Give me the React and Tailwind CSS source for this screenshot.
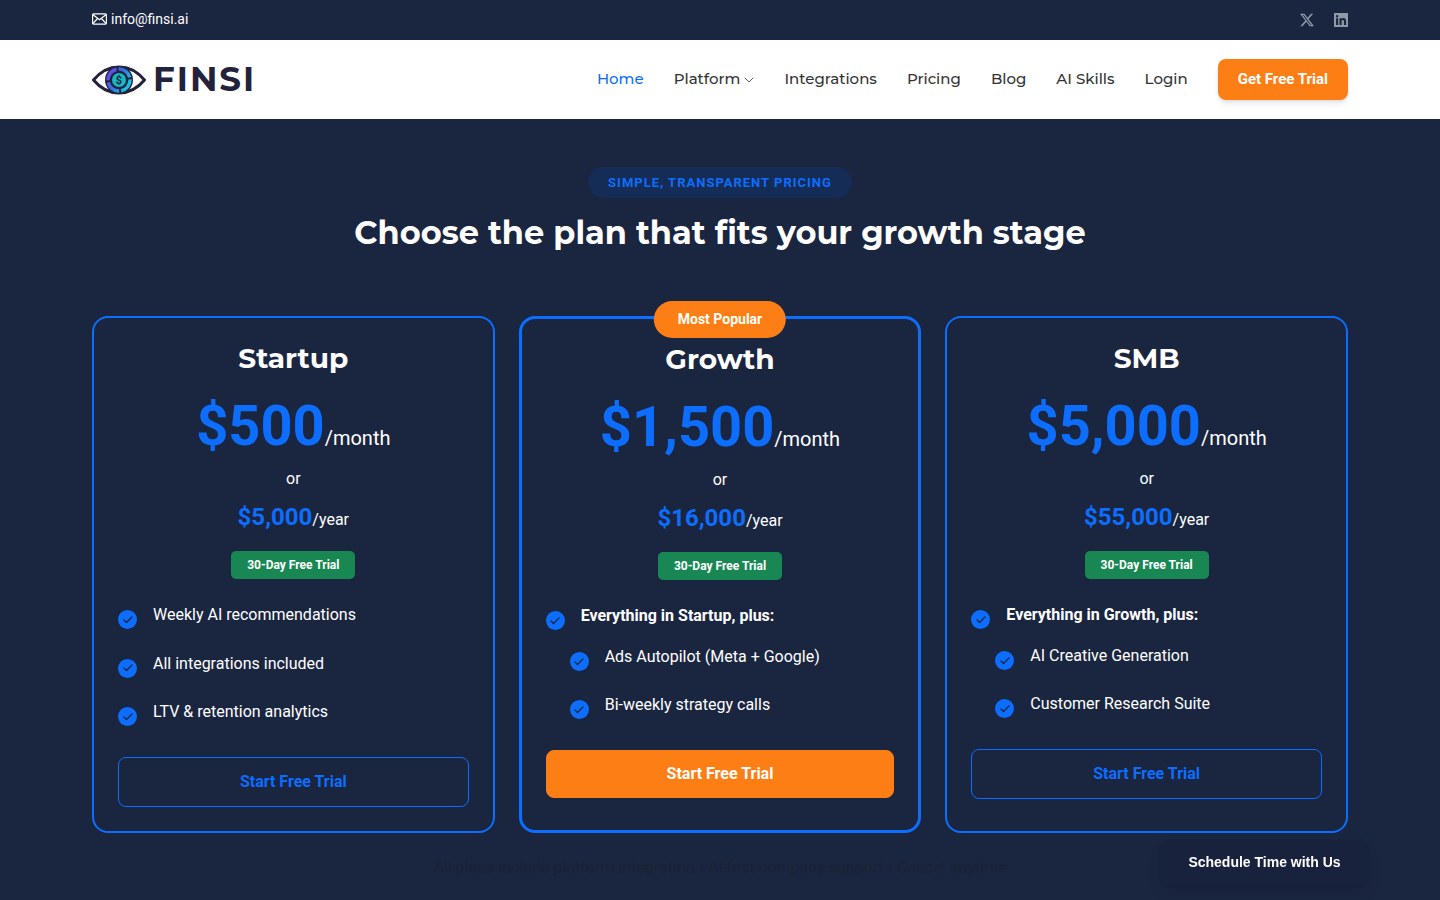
import React from 'react';
import { Check, ChevronDown } from 'lucide-react';

const headingFont = "font-['Montserrat','Inter',sans-serif]";

const plans = [
  {
    name: 'Startup',
    price: '$500',
    yearly: '$5,000',
    items: ['Weekly AI recommendations', 'All integrations included', 'LTV & retention analytics'],
  },
  {
    name: 'Growth',
    price: '$1,500',
    yearly: '$16,000',
    popular: true,
    lead: 'Everything in Startup, plus:',
    items: ['Ads Autopilot (Meta + Google)', 'Bi-weekly strategy calls'],
  },
  {
    name: 'SMB',
    price: '$5,000',
    yearly: '$55,000',
    lead: 'Everything in Growth, plus:',
    items: ['AI Creative Generation', 'Customer Research Suite'],
  },
];

const navLinks = ['Integrations', 'Pricing', 'Blog', 'AI Skills', 'Login'];

const Logo = () => (
  <div className="flex items-center gap-[7px]">
    <svg width="54" height="30" viewBox="0 0 54 30" fill="none">
      <defs>
        <linearGradient id="iris" x1="0" y1="0" x2="1" y2="0.6">
          <stop offset="0" stopColor="#7c3aed" />
          <stop offset="0.5" stopColor="#2f6fe6" />
          <stop offset="1" stopColor="#1fc0e0" />
        </linearGradient>
      </defs>
      <path d="M1.5 15C9 6 17 2 27 2s18 4 25.5 13C45 24 37 28 27 28S9 24 1.5 15Z" stroke="#22223b" strokeWidth="3" strokeLinejoin="round" />
      <circle cx="27" cy="15" r="14" fill="#22223b" />
      <circle cx="27" cy="15" r="11" stroke="url(#iris)" strokeWidth="3.5" strokeDasharray="15 2" />
      <circle cx="27" cy="15" r="7" fill="#19b6c4" />
      <text x="27" y="19" textAnchor="middle" fontSize="11" fontWeight="700" fill="#22223b" fontFamily="Roboto, sans-serif">$</text>
    </svg>
    <span className={`${headingFont} mb-[2px] text-[34px] leading-none font-bold tracking-[2px] text-[#22223b]`}>FINSI</span>
  </div>
);

const CheckDot = () => (
  <span className="mt-[7px] flex h-[19px] w-[19px] shrink-0 items-center justify-center rounded-full bg-[#0d6efd]">
    <Check className="h-3 w-3 text-[#1a2540]" strokeWidth={2.5} />
  </span>
);

const PlanCard = ({ plan }) => (
  <div className={`relative rounded-[16px] border-[#0d6efd] px-6 pt-[22px] pb-6 ${plan.popular ? 'border-[3px]' : 'border-2'}`}>
    {plan.popular && (
      <span className="absolute top-[-18px] left-1/2 -translate-x-1/2 rounded-full bg-[#fd7e14] px-6 py-[9px] text-sm leading-[19px] font-bold text-white">
        Most Popular
      </span>
    )}
    <h3 className={`${headingFont} text-center text-[28px] leading-[36px] font-bold text-white`}>{plan.name}</h3>
    <div className="mt-[17px] text-center text-white">
      <span className="text-[56px] leading-[67px] font-bold text-[#0d6efd]">{plan.price}</span>
      <span className="text-xl">/month</span>
    </div>
    <p className="mt-[7px] text-center text-base leading-6 text-white">or</p>
    <div className="mt-[10px] text-center text-white">
      <span className="text-2xl leading-[32px] font-bold text-[#0d6efd]">{plan.yearly}</span>
      <span className="text-base">/year</span>
    </div>
    <div className="mt-[18px] flex justify-center">
      <span className="rounded-[5px] bg-[#198754] px-4 py-[6px] text-xs leading-4 font-bold text-white">30-Day Free Trial</span>
    </div>
    <ul className={`mt-[24px] flex flex-col text-white ${plan.lead ? 'mb-[30.5px]' : 'mb-[31px]'}`}>
      {plan.lead && (
        <li className="mb-[15px] flex gap-4 text-base leading-6 font-bold">
          <CheckDot />
          {plan.lead}
        </li>
      )}
      {plan.items.map(item => (
        <li key={item} className={`flex gap-4 text-base leading-6 last:mb-0 ${plan.lead ? 'mb-[22px] pl-6' : 'mb-[22.5px]'}`}>
          <CheckDot />
          {item}
        </li>
      ))}
    </ul>
    <button
      className={`w-full rounded-lg border text-base font-bold ${
        plan.popular ? 'h-12 border-[#fd7e14] bg-[#fd7e14] text-white' : 'h-[50px] border-[#0d6efd] text-[#0d6efd]'
      }`}
    >
      Start Free Trial
    </button>
  </div>
);

const App = () => {
  return (
    <div className="min-h-screen bg-[#1a2540] font-['Roboto',sans-serif]">
      <div className="flex h-10 items-center justify-between px-[92px]">
        <a className="mb-[2px] flex items-center gap-1 text-sm text-white">
          <svg width="15" height="12" viewBox="0 0 15 12" fill="none" stroke="currentColor" strokeWidth="1.2">
            <rect x="0.6" y="0.9" width="13.8" height="10.2" rx="1" />
            <path d="M0.8 1.5 7.5 6.8l6.7-5.3M0.8 10.7l4.8-5.2M14.2 10.7 9.4 5.5" />
          </svg>
          info@finsi.ai
        </a>
        <div className="flex items-center gap-[20px] text-[#8f97a8]">
          <svg width="14" height="14" viewBox="0 0 24 24" fill="currentColor">
            <path d="M18.9 1.2h3.7l-8 9.2L24 22.8h-7.4l-5.8-7.6-6.6 7.6H.5l8.6-9.8L0 1.2h7.6l5.2 6.9 6.1-6.9Zm-1.3 19.4h2L6.5 3.3H4.3l13.3 17.3Z" />
          </svg>
          <svg width="14" height="14" viewBox="0 0 24 24" fill="currentColor">
            <path d="M0 0h24v24H0V0Zm3.5 9v11.5h3.6V9H3.5Zm1.8-5.6a2.1 2.1 0 1 0 0 4.2 2.1 2.1 0 0 0 0-4.2ZM9.4 9v11.5H13v-5.7c0-1.5.3-3 2.2-3s1.9 1.8 1.9 3.1v5.6h3.6v-6.3c0-3.1-.7-5.5-4.3-5.5-1.7 0-2.9.9-3.4 1.8V9H9.4Z" />
          </svg>
        </div>
      </div>

      <nav className="flex h-[79px] items-center justify-between bg-white px-[92px]">
        <Logo />
        <div className={`${headingFont} flex items-center gap-[30px] text-[15px] font-medium text-[#333]`}>
          <a className="text-[#0d6efd]">Home</a>
          <a className="flex items-center">
            Platform
            <ChevronDown className="-mr-[3px] ml-[1px] h-4 w-4 text-[#555]" strokeWidth={1.5} />
          </a>
          {navLinks.map(link => (
            <a key={link}>{link}</a>
          ))}
          <a className="rounded-lg bg-[#fd7e14] px-5 py-[10px] font-['Roboto',sans-serif] text-[15px] leading-[21px] font-bold text-white shadow-md">
            Get Free Trial
          </a>
        </div>
      </nav>

      <section className="px-[92px] pt-[48px]">
        <div className="flex flex-col items-center">
          <span className="rounded-full bg-[#152c57] px-5 py-[7px] text-[13px] leading-[17px] font-bold tracking-[1px] text-[#0d6efd]">
            SIMPLE, TRANSPARENT PRICING
          </span>
          <h2 className={`${headingFont} mt-[13px] text-[32px] leading-[44px] font-bold text-white`}>
            Choose the plan that fits your growth stage
          </h2>
        </div>

        <div className="mt-[61px] grid grid-cols-3 gap-6">
          {plans.map(plan => (
            <PlanCard key={plan.name} plan={plan} />
          ))}
        </div>

        <p className="mt-[23px] text-center text-base text-[#1c2233]">
          All plans include platform integration • AI-first company support • Cancel anytime
        </p>
      </section>

      <a className="fixed right-[69px] bottom-[15px] flex h-[46px] w-[213px] items-center justify-center rounded-xl bg-[#18223c] font-['Liberation_Sans',sans-serif] text-sm font-bold text-white shadow-lg">
        Schedule Time with Us
      </a>
    </div>
  );
};

export default App;
